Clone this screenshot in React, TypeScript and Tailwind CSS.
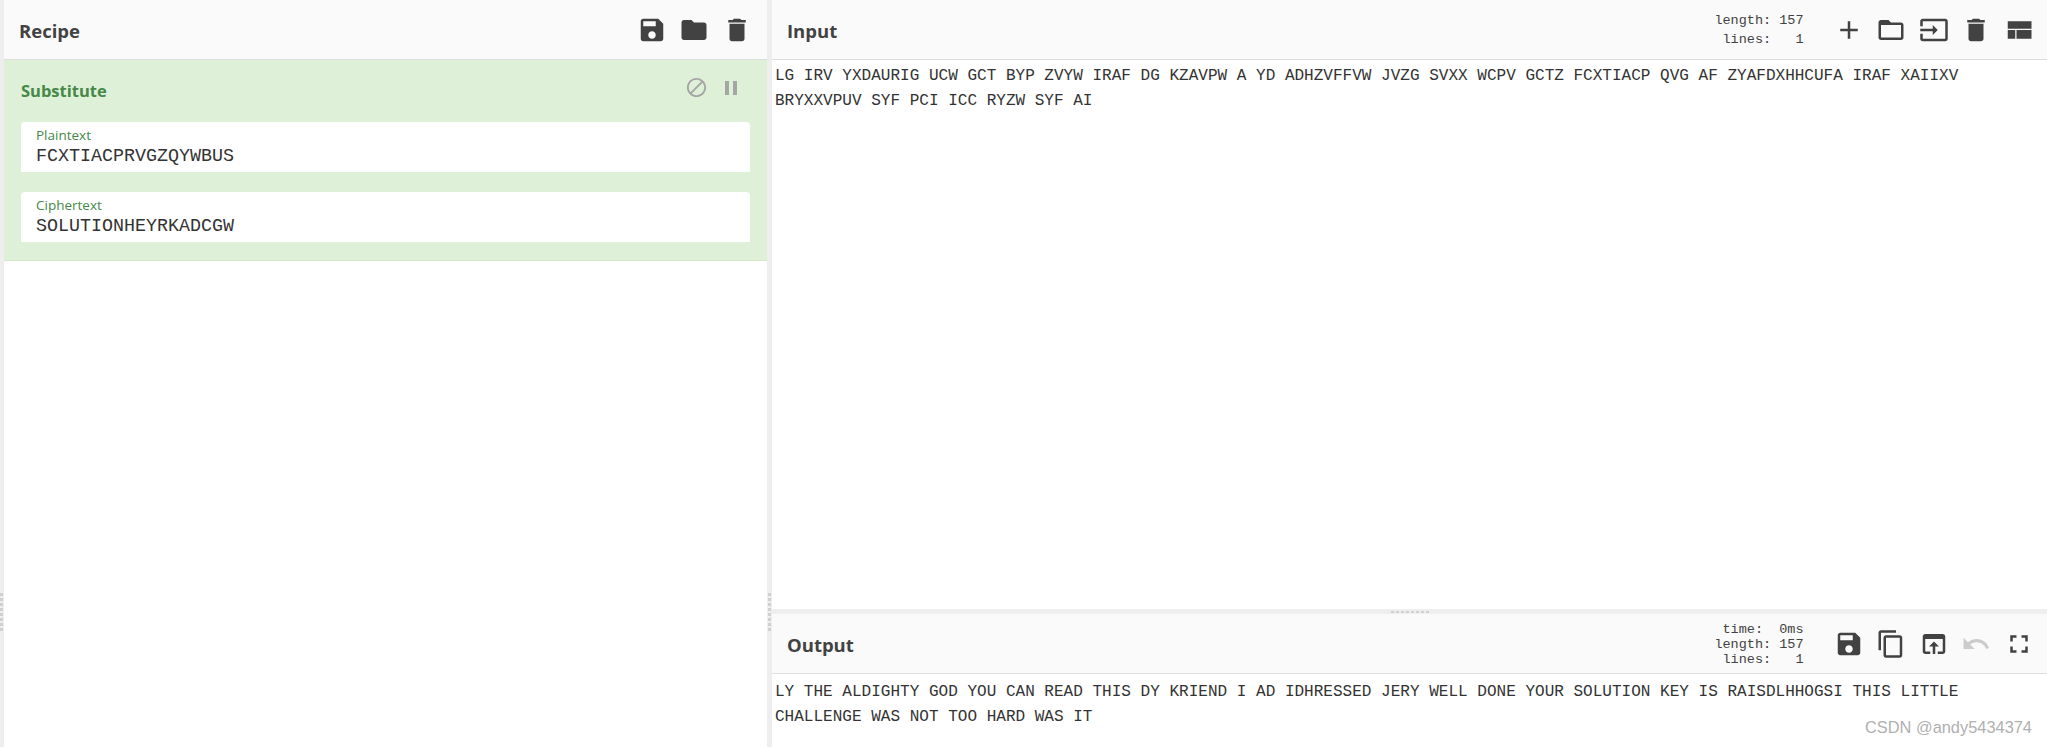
const sans = { fontFamily: '"Open Sans", sans-serif' }

const icons = {
  save: 'M17 3H5c-1.11 0-2 .9-2 2v14c0 1.1.89 2 2 2h14c1.1 0 2-.9 2-2V7l-4-4zm-5 16c-1.66 0-3-1.34-3-3s1.34-3 3-3 3 1.34 3 3-1.34 3-3 3zm3-10H5V5h10v4z',
  folder: 'M10 4H4c-1.1 0-1.99.9-1.99 2L2 18c0 1.1.9 2 2 2h16c1.1 0 2-.9 2-2V8c0-1.1-.9-2-2-2h-8l-2-2z',
  folderOpen: 'M20 6h-8l-2-2H4c-1.1 0-1.99.9-1.99 2L2 18c0 1.1.9 2 2 2h16c1.1 0 2-.9 2-2V8c0-1.1-.9-2-2-2zm0 12H4V8h16v10z',
  trash: 'M6 19c0 1.1.9 2 2 2h8c1.1 0 2-.9 2-2V7H6v12zM19 4h-3.5l-1-1h-5l-1 1H5v2h14V4z',
  add: 'M19 13h-6v6h-2v-6H5v-2h6V5h2v6h6v2z',
  input: 'M21 3.01H3c-1.1 0-2 .9-2 2V9h2V4.99h18v14.03H3V15H1v4.01c0 1.1.9 1.98 2 1.98h18c1.1 0 2-.88 2-1.98v-14c0-1.11-.9-2-2-2zM11 16l4-4-4-4v3H1v2h10v3z',
  layout: 'M3 19h6v-7H3v7zm7 0h12v-7H10v7zM3 5v6h19V5H3z',
  copy: 'M16 1H4c-1.1 0-2 .9-2 2v14h2V3h12V1zm3 4H8c-1.1 0-2 .9-2 2v14c0 1.1.9 2 2 2h11c1.1 0 2-.9 2-2V7c0-1.1-.9-2-2-2zm0 16H8V7h11v14z',
  openBrowser: 'M19 4H5c-1.11 0-2 .9-2 2v12c0 1.1.89 2 2 2h4v-2H5V8h14v10h-4v2h4c1.1 0 2-.9 2-2V6c0-1.1-.89-2-2-2zm-7 6l-4 4h3v6h2v-6h3l-4-4z',
  undo: 'M12.5 8c-2.65 0-5.05.99-6.9 2.6L2 7v9h9l-3.62-3.62c1.39-1.16 3.16-1.88 5.12-1.88 3.54 0 6.55 2.31 7.6 5.5l2.37-.78C21.08 11.03 17.15 8 12.5 8z',
  fullscreen: 'M7 14H5v5h5v-2H7v-3zm-2-4h2V7h3V5H5v5zm12 7h-3v2h5v-5h-2v3zM14 5v2h3v3h2V5h-5z',
  disable: 'M12 2C6.48 2 2 6.48 2 12s4.48 10 10 10 10-4.48 10-10S17.52 2 12 2zM4 12c0-4.42 3.58-8 8-8 1.85 0 3.55.63 4.9 1.69L5.69 16.9C4.63 15.55 4 13.85 4 12zm8 8c-1.85 0-3.55-.63-4.9-1.69L18.31 7.1C19.37 8.45 20 10.15 20 12c0 4.42-3.58 8-8 8z',
  pause: 'M6 19h4V5H6v14zm8-14v14h4V5h-4z',
}

function Icon({ d, className }: { d: string; className: string }) {
  return (
    <svg viewBox="0 0 24 24" fill="currentColor" className={className}>
      <path d={d} />
    </svg>
  )
}

function ToolButton({ d, muted }: { d: string; muted?: boolean }) {
  return (
    <button className={`w-[42.5px] flex justify-center ${muted ? 'text-[#ccc]' : 'text-[#424242]'}`}>
      <Icon d={d} className="w-[30px] h-[30px]" />
    </button>
  )
}

function PanelHeader({ title, pad, children }: { title: string; pad: string; children: React.ReactNode }) {
  return (
    <div className={`h-[60px] shrink-0 flex items-center bg-[#fafafa] border-b border-[#ddd] pl-[15px] ${pad}`}>
      <h2 className="text-[18.5px] font-bold text-[#424242] pt-[2px]" style={sans}>{title}</h2>
      <div className="ml-auto flex items-center">{children}</div>
    </div>
  )
}

function Stats({ rows, className }: { rows: string[]; className: string }) {
  return (
    <pre className={`mr-[24px] text-right text-[13.5px] text-[#424242] font-['Liberation_Mono',monospace] ${className}`}>
      {rows.join('\n')}
    </pre>
  )
}

function Field({ label, value }: { label: string; value: string }) {
  return (
    <div className="h-[50px] bg-white rounded-t-[4px] pl-[15px] pt-[4px]">
      <div className="text-[13.5px] leading-[18px] text-[#468847]" style={sans}>{label}</div>
      <div className="text-[18.33px] leading-[26px] text-[#333] font-['Liberation_Mono',monospace]">{value}</div>
    </div>
  )
}

function Dots({ vertical }: { vertical?: boolean }) {
  return (
    <div className={`flex ${vertical ? 'flex-col gap-[2px]' : 'gap-[2px]'}`}>
      {[0, 1, 2, 3, 4, 5, 6, 7].map((i) => (
        <span key={i} className={`bg-[#d0d0d0] ${vertical ? 'w-[3px] h-[3px]' : 'w-[3px] h-[2px]'}`} />
      ))}
    </div>
  )
}

export default function App() {
  return (
    <div className="relative h-[747px] flex overflow-hidden bg-white">
      <div className="w-[4px] shrink-0 bg-[#eee] pt-[593px]"><Dots vertical /></div>

      <section className="w-[763px] shrink-0 flex flex-col">
        <PanelHeader title="Recipe" pad="pr-[9px]">
          <ToolButton d={icons.save} />
          <ToolButton d={icons.folder} />
          <ToolButton d={icons.trash} />
        </PanelHeader>
        <div className="h-[201px] bg-[#dff0d8] border-b border-[#d6e9c6] px-[17px]">
          <div className="h-[62px] flex items-center">
            <h3 className="text-[16.5px] font-bold text-[#468847]" style={sans}>Substitute</h3>
            <div className="ml-auto flex items-center gap-[9px] pr-[7px] -mt-[7px] text-[#a5a5a5]">
              <Icon d={icons.disable} className="w-[23px] h-[23px] -translate-x-[2px]" />
              <Icon d={icons.pause} className="w-[24px] h-[24px]" />
            </div>
          </div>
          <div className="flex flex-col gap-5">
            <Field label="Plaintext" value="FCXTIACPRVGZQYWBUS" />
            <Field label="Ciphertext" value="SOLUTIONHEYRKADCGW" />
          </div>
        </div>
      </section>

      <div className="w-[5px] shrink-0 bg-[#eee] pt-[593px] pl-[1px]"><Dots vertical /></div>

      <main className="flex-1 min-w-0 flex flex-col">
        <section className="flex-1 min-h-0 flex flex-col">
          <PanelHeader title="Input" pad="pr-[7px]">
            <Stats rows={['length: 157', 'lines:   1']} className="leading-[19px]" />
            <ToolButton d={icons.add} />
            <ToolButton d={icons.folderOpen} />
            <ToolButton d={icons.input} />
            <ToolButton d={icons.trash} />
            <ToolButton d={icons.layout} />
          </PanelHeader>
          <p className="pl-[3px] pt-[4px] text-[16.05px] leading-[25px] text-[#333] font-['Liberation_Mono',monospace]">
            LG IRV YXDAURIG UCW GCT BYP ZVYW IRAF DG KZAVPW A YD ADHZVFFVW JVZG SVXX WCPV GCTZ FCXTIACP QVG AF ZYAFDXHHCUFA IRAF XAIIXV BRYXXVPUV SYF PCI ICC RYZW SYF AI
          </p>
        </section>

        <div className="h-[5px] shrink-0 bg-[#eee] flex justify-center items-center"><Dots /></div>

        <section className="h-[133px] shrink-0 flex flex-col">
          <PanelHeader title="Output" pad="pr-[7px]">
            <Stats rows={['time:  0ms', 'length: 157', 'lines:   1']} className="leading-[15px] pt-[2px]" />
            <ToolButton d={icons.save} />
            <ToolButton d={icons.copy} />
            <ToolButton d={icons.openBrowser} />
            <ToolButton d={icons.undo} muted />
            <ToolButton d={icons.fullscreen} />
          </PanelHeader>
          <p className="pl-[3px] pt-[6px] text-[16.05px] leading-[25px] text-[#333] font-['Liberation_Mono',monospace]">
            LY THE ALDIGHTY GOD YOU CAN READ THIS DY KRIEND I AD IDHRESSED JERY WELL DONE YOUR SOLUTION KEY IS RAISDLHHOGSI THIS LITTLE CHALLENGE WAS NOT TOO HARD WAS IT
          </p>
        </section>
      </main>

      <span className="absolute right-[15px] bottom-[7px] text-[16.4px] text-[#b0b0b0] font-['Liberation_Sans',sans-serif]">
        CSDN @andy5434374
      </span>
    </div>
  )
}
